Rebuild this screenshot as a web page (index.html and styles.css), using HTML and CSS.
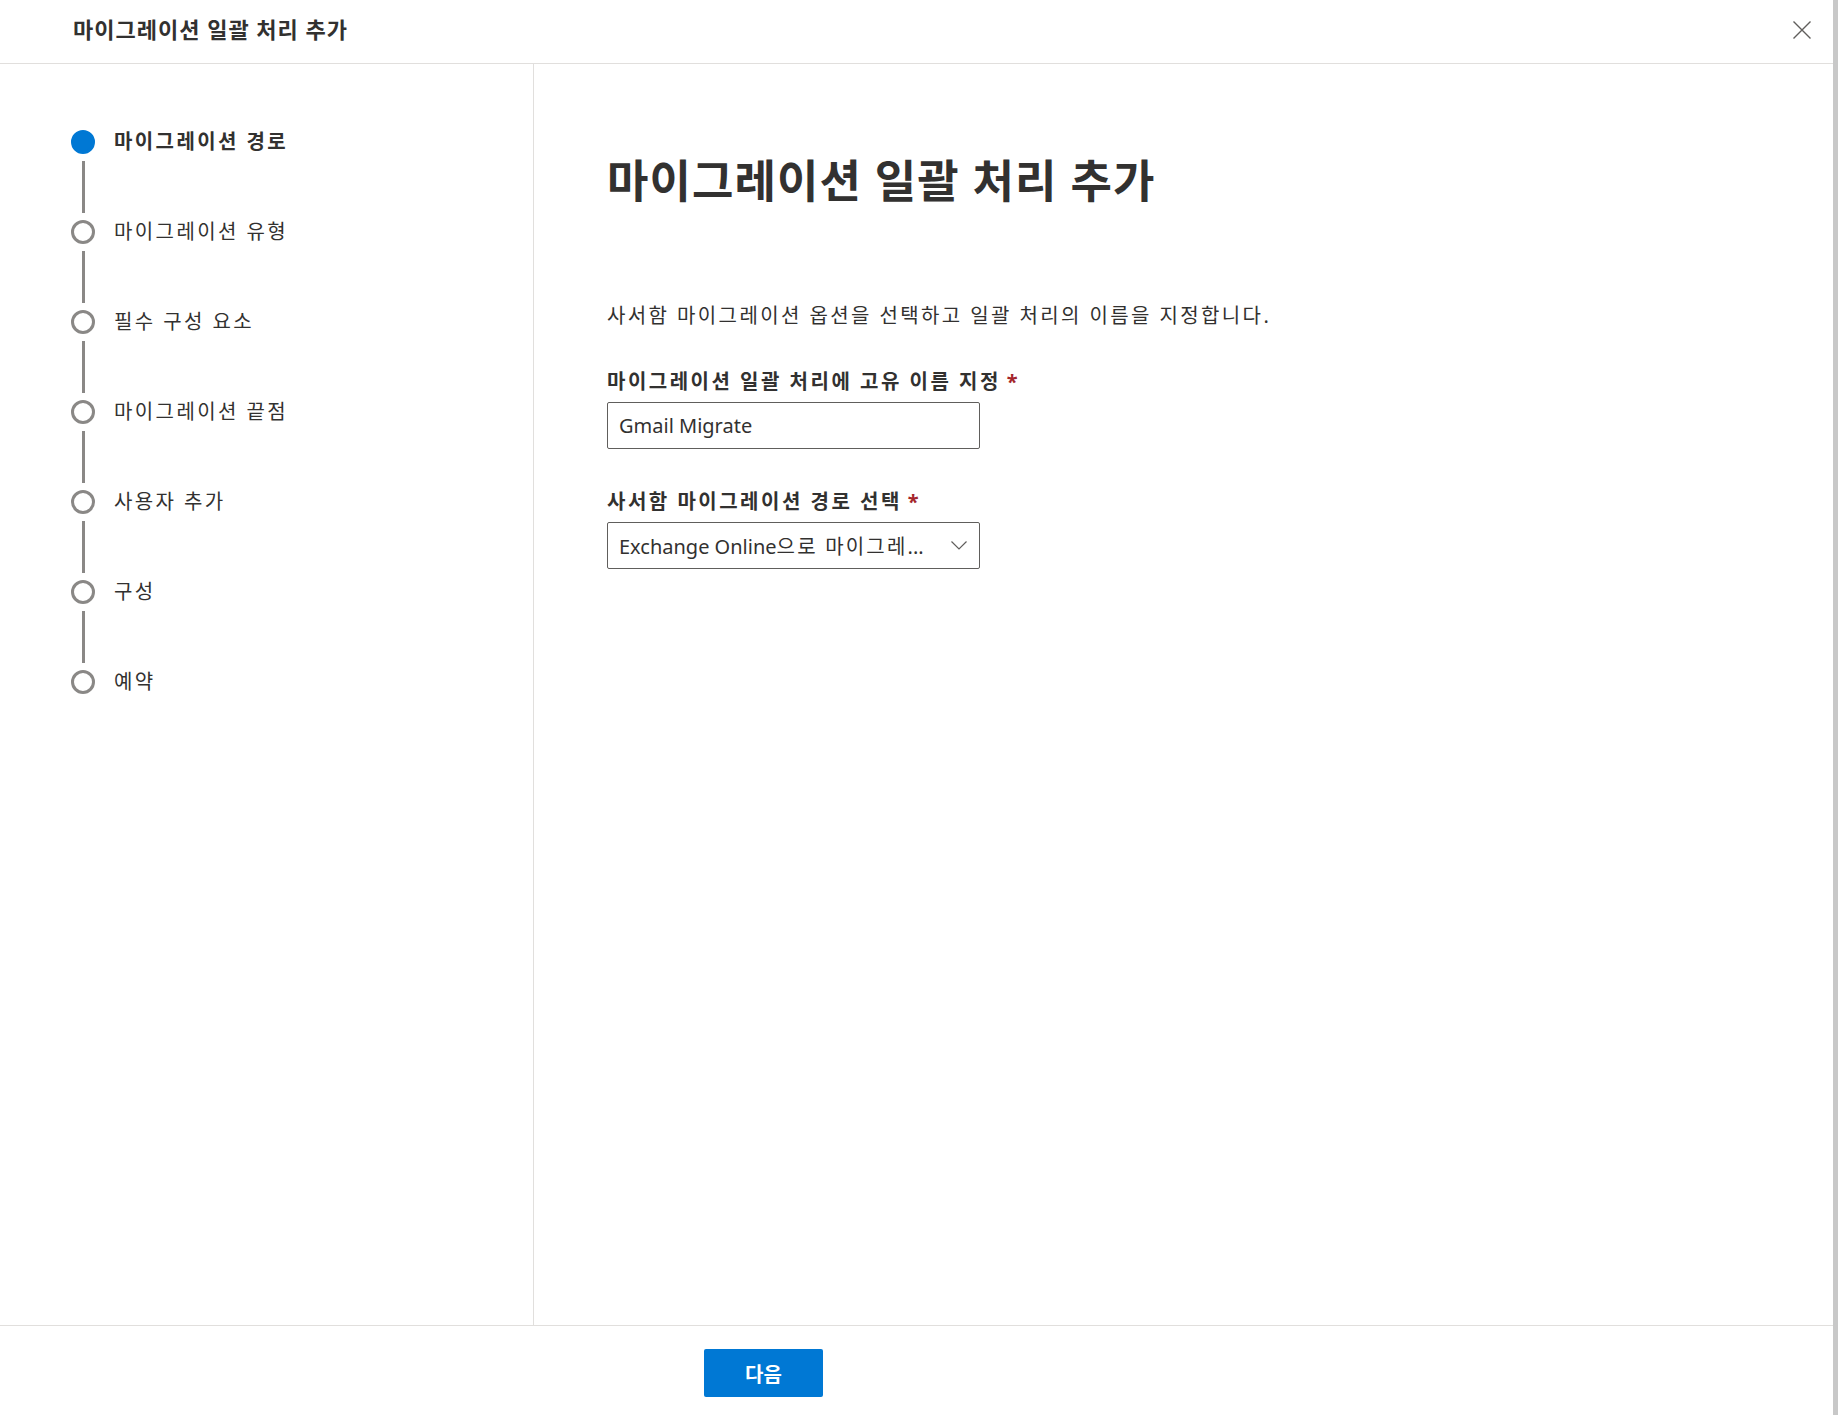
FILE: index.html
```html
<!DOCTYPE html>
<html lang="ko">
<head>
    <meta charset="UTF-8">
    <meta name="viewport" content="width=device-width, initial-scale=1.0">
    <title>마이그레이션 일괄 처리 추가</title>
    <link rel="stylesheet" href="styles.css">
</head>
<body>
    <div class="page">
        <div class="panel">
            <div class="panel-header">
                <div class="panel-title">마이그레이션 일괄 처리 추가</div>
                <button class="close-btn" aria-label="닫기">
                    <svg width="18" height="18" viewBox="0 0 18 18">
                        <path d="M0.5 0.5 L17.5 17.5 M17.5 0.5 L0.5 17.5" stroke="#605e5c" stroke-width="1.4" fill="none"/>
                    </svg>
                </button>
            </div>

            <div class="panel-body">
                <div class="steps">
                    <div class="step active">
                        <div class="marker"><span class="dot"></span><span class="line"></span></div>
                        <div class="step-label">마이그레이션 경로</div>
                    </div>
                    <div class="step">
                        <div class="marker"><span class="dot"></span><span class="line"></span></div>
                        <div class="step-label">마이그레이션 유형</div>
                    </div>
                    <div class="step">
                        <div class="marker"><span class="dot"></span><span class="line"></span></div>
                        <div class="step-label">필수 구성 요소</div>
                    </div>
                    <div class="step">
                        <div class="marker"><span class="dot"></span><span class="line"></span></div>
                        <div class="step-label">마이그레이션 끝점</div>
                    </div>
                    <div class="step">
                        <div class="marker"><span class="dot"></span><span class="line"></span></div>
                        <div class="step-label">사용자 추가</div>
                    </div>
                    <div class="step">
                        <div class="marker"><span class="dot"></span><span class="line"></span></div>
                        <div class="step-label">구성</div>
                    </div>
                    <div class="step">
                        <div class="marker"><span class="dot"></span></div>
                        <div class="step-label">예약</div>
                    </div>
                </div>

                <div class="content">
                    <h1 class="heading">마이그레이션 일괄 처리 추가</h1>
                    <p class="desc">사서함 마이그레이션 옵션을 선택하고 일괄 처리의 이름을 지정합니다.</p>

                    <div class="field">
                        <label class="field-label" for="batch-name">마이그레이션 일괄 처리에 고유 이름 지정<span class="req">*</span></label>
                        <input type="text" id="batch-name" class="text-input" value="Gmail Migrate">
                    </div>

                    <div class="field second">
                        <div class="field-label">사서함 마이그레이션 경로 선택<span class="req">*</span></div>
                        <div class="dropdown">
                            <span class="dropdown-text">Exchange Online<span class="ko">으로 마이그레</span>...</span>
                            <svg width="16" height="9" viewBox="0 0 16 9">
                                <path d="M0.5 0.5 L8 8 L15.5 0.5" stroke="#605e5c" stroke-width="1.2" fill="none"/>
                            </svg>
                        </div>
                    </div>
                </div>
            </div>

            <div class="footer">
                <button class="next-btn">다음</button>
            </div>
        </div>
        <div class="edge"></div>
    </div>
</body>
</html>
```

FILE: styles.css
```css
body {
    margin: 0;
    font-family: "Noto Sans", "Noto Sans CJK KR", sans-serif;
    color: #323130;
    background-color: #ffffff;
}
.page {
    display: flex;
    height: 100vh;
}
.panel {
    flex: 1;
    display: flex;
    flex-direction: column;
    background-color: #ffffff;
}
.edge {
    width: 5px;
    background-color: #c8c8c8;
}
.panel-header {
    height: 63px;
    flex-shrink: 0;
    display: flex;
    align-items: center;
    justify-content: space-between;
    padding: 0 22px 0 73px;
    border-bottom: 1px solid #e1dfdd;
}
.panel-title {
    font-size: 22px;
    font-weight: bold;
    letter-spacing: 1px;
    margin-top: -7px;
}
.close-btn {
    width: 18px;
    height: 18px;
    padding: 0;
    border: none;
    background: none;
    cursor: pointer;
    display: flex;
    margin-top: -4px;
}
.panel-body {
    flex: 1;
    display: flex;
}
.steps {
    width: 534px;
    box-sizing: border-box;
    border-right: 1px solid #e1dfdd;
    padding: 66px 0 0 71px;
}
.step {
    display: flex;
    gap: 19px;
}
.marker {
    width: 24px;
    display: flex;
    flex-direction: column;
    align-items: center;
}
.dot {
    width: 24px;
    height: 24px;
    box-sizing: border-box;
    border: 3px solid #8a8886;
    border-radius: 50%;
    background-color: #ffffff;
}
.step.active .dot {
    border-color: #0078d4;
    background-color: #0078d4;
}
.line {
    width: 3px;
    height: 52px;
    margin: 7px 0;
    background-color: #8a8886;
}
.step-label {
    font-size: 20px;
    line-height: 24px;
    letter-spacing: 2.4px;
}
.step.active .step-label {
    font-weight: bold;
}
.content {
    flex: 1;
    padding: 91px 0 0 73px;
}
.heading {
    margin: 0 0 95px;
    font-size: 45px;
    line-height: 52px;
    font-weight: bold;
    letter-spacing: 1.1px;
}
.desc {
    margin: 0 0 38px;
    font-size: 20px;
    line-height: 28px;
    letter-spacing: 2.4px;
}
.field-label {
    display: block;
    font-size: 20px;
    line-height: 28px;
    font-weight: bold;
    letter-spacing: 2.5px;
    margin-bottom: 6px;
}
.req {
    color: #a4262c;
    margin-left: 6px;
}
.field.second {
    margin-top: 39px;
}
.text-input, .dropdown {
    width: 373px;
    height: 47px;
    box-sizing: border-box;
    border: 1px solid #605e5c;
    border-radius: 2px;
    padding: 0 11px;
    font-family: "Noto Sans", "Noto Sans CJK KR", sans-serif;
    font-size: 20px;
    color: #323130;
    outline: none;
}
.dropdown {
    display: flex;
    align-items: center;
    justify-content: space-between;
    padding-right: 12px;
}
.dropdown-text {
    white-space: nowrap;
}
.dropdown-text .ko {
    letter-spacing: 2.2px;
}
.footer {
    height: 90px;
    flex-shrink: 0;
    box-sizing: border-box;
    border-top: 1px solid #e1dfdd;
    padding: 23px 0 0 704px;
    background-color: #ffffff;
}
.next-btn {
    width: 119px;
    height: 48px;
    border: none;
    border-radius: 2px;
    background-color: #0078d4;
    color: #ffffff;
    font-family: "Noto Sans", "Noto Sans CJK KR", sans-serif;
    font-size: 20px;
    font-weight: bold;
    cursor: pointer;
}
```
